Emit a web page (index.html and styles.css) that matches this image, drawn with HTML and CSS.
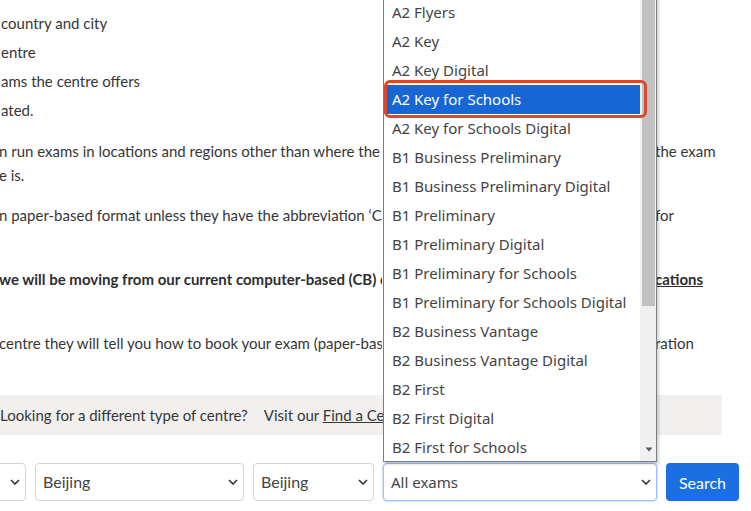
FILE: index.html
```html
<!DOCTYPE html>
<html lang="en">
<head>
<meta charset="utf-8">
<title>Find an exam centre</title>
<link rel="stylesheet" href="styles.css">
</head>
<body>
<div class="page">
  <ul class="list">
    <li>country and city</li>
    <li>entre</li>
    <li>ams the centre offers</li>
    <li>ated.</li>
  </ul>

  <p class="para">
    <span class="row"><span class="l">n run exams in locations and regions other than where the centre is based. Please check with the centre where</span><span class="r">the exam</span></span>
    <span class="row"><span class="l">e is.</span></span>
  </p>

  <p class="para">
    <span class="row"><span class="l">n paper-based format unless they have the abbreviation ‘CB’ (computer-based) next to them. Please ask the centre</span><span class="r">for</span></span>
    <span class="row"><span class="l"></span></span>
  </p>

  <p class="para bold">
    <span class="row"><span class="l">we will be moving from our current computer-based (CB) exams to our <u>new digital qualifi</u></span><span class="r"><u>cations</u></span></span>
    <span class="row"><span class="l"></span></span>
  </p>

  <p class="para">
    <span class="row"><span class="l">centre they will tell you how to book your exam (paper-based or computer-based) and the regist</span><span class="r">ration</span></span>
    <span class="row"><span class="l"></span></span>
  </p>

  <div class="notice">
    <span>Looking for a different type of centre?</span>
    <span class="visit">Visit our <u>Find a Centre</u> page</span>
  </div>

  <div class="filters">
    <div class="select s1"><span class="val">China</span><svg class="chev" width="10" height="6" viewBox="0 0 10 6"><path d="M1 1l4 4 4-4" fill="none" stroke="#333" stroke-width="1.6"/></svg></div>
    <div class="select s2"><span class="val">Beijing</span><svg class="chev" width="10" height="6" viewBox="0 0 10 6"><path d="M1 1l4 4 4-4" fill="none" stroke="#333" stroke-width="1.6"/></svg></div>
    <div class="select s3"><span class="val">Beijing</span><svg class="chev" width="10" height="6" viewBox="0 0 10 6"><path d="M1 1l4 4 4-4" fill="none" stroke="#333" stroke-width="1.6"/></svg></div>
    <div class="select s4 focus"><span class="val sys">All exams</span><svg class="chev" width="10" height="6" viewBox="0 0 10 6"><path d="M1 1l4 4 4-4" fill="none" stroke="#333" stroke-width="1.6"/></svg></div>
    <button class="btn">Search</button>
  </div>
</div>

<div class="popup">
  <ul class="opts">
    <li>A1 Movers</li>
    <li>A2 Flyers</li>
    <li>A2 Key</li>
    <li>A2 Key Digital</li>
    <li class="sel">A2 Key for Schools</li>
    <li>A2 Key for Schools Digital</li>
    <li>B1 Business Preliminary</li>
    <li>B1 Business Preliminary Digital</li>
    <li>B1 Preliminary</li>
    <li>B1 Preliminary Digital</li>
    <li>B1 Preliminary for Schools</li>
    <li>B1 Preliminary for Schools Digital</li>
    <li>B2 Business Vantage</li>
    <li>B2 Business Vantage Digital</li>
    <li>B2 First</li>
    <li>B2 First Digital</li>
    <li>B2 First for Schools</li>
  </ul>
  <div class="sb">
    <div class="thumb"></div>
    <svg class="arrow" width="8" height="5" viewBox="0 0 8 5"><path d="M0.5 0.5h7L4 4.5z" fill="#555"/></svg>
  </div>
</div>
<div class="mark"></div>
</body>
</html>
```

FILE: styles.css
```css
html, body {
  margin: 0;
  padding: 0;
  background: #fff;
  overflow: hidden;
  height: 511px;
}
body {
  font-family: Lato, "Liberation Sans", sans-serif;
  font-size: 15px;
  line-height: 24px;
  color: #363636;
  position: relative;
}
.page {
  padding-top: 11px;
}
.list {
  list-style: none;
  margin: 0 0 17px 0;
  padding: 0 0 0 1px;
}
.list li {
  margin-bottom: 5px;
}
.list li:last-child {
  margin-bottom: 0;
}
.para {
  margin: 0 0 16px 0;
}
.row {
  display: flex;
  height: 24px;
  white-space: nowrap;
}
.row .l {
  width: 383px;
  flex: none;
  overflow: hidden;
  margin-left: -1px;
}
.row .r {
  flex: none;
  margin-left: 273px;
}
.bold {
  font-weight: 700;
  color: #2e2e2e;
}
.notice {
  width: 722px;
  height: 40px;
  background: #f1f0ef;
  display: flex;
  align-items: center;
  gap: 16px;
  white-space: nowrap;
  overflow: hidden;
}
.filters {
  display: flex;
  gap: 9px;
  margin-top: 28px;
  height: 38px;
}
.select {
  box-sizing: border-box;
  height: 38px;
  border: 1px solid #ced4da;
  border-radius: 4px;
  background: #fff;
  display: flex;
  align-items: center;
  justify-content: space-between;
  padding: 0 5px 0 7px;
  font-size: 16px;
  color: #444;
  flex: none;
}
.s1 { width: 120px; margin-left: -94px; }
.s2 { width: 209px; }
.s3 { width: 121px; }
.s4 { width: 274px; }
.focus {
  border-color: #9cc3fb;
  box-shadow: 0 0 0 1px rgba(120, 170, 250, .35);
}
.sys {
  font-family: "Noto Sans", sans-serif;
  font-size: 15px;
  color: #444;
}
.chev { flex: none; }
.btn {
  box-sizing: border-box;
  width: 73px;
  height: 38px;
  border: none;
  border-radius: 4px;
  background: #1b6fe2;
  color: #fff;
  font-family: Lato, "Liberation Sans", sans-serif;
  font-size: 16px;
  padding: 0;
  flex: none;
}
.popup {
  position: absolute;
  left: 383px;
  top: -32px;
  width: 274px;
  height: 494px;
  box-sizing: border-box;
  border: 1px solid #7d7d7d;
  background: #fff;
  display: flex;
  box-shadow: 2px 2px 3px rgba(0, 0, 0, .18);
}
.opts {
  list-style: none;
  margin: 0;
  padding: 0;
  flex: 1;
  font-family: "Noto Sans", sans-serif;
  font-size: 15px;
  color: #444;
}
.opts li {
  height: 29px;
  line-height: 29px;
  padding-left: 8px;
  white-space: nowrap;
}
.opts li.sel {
  background: #1766d6;
  color: #fff;
}
.sb {
  width: 16px;
  flex: none;
  background: #f0f0f0;
  position: relative;
}
.thumb {
  margin: 0 1px 0 2px;
  height: 337px;
  background: #c1c1c1;
}
.arrow {
  position: absolute;
  left: 5px;
  bottom: 9px;
}
.mark {
  position: absolute;
  left: 384px;
  top: 80px;
  width: 263px;
  height: 38px;
  box-sizing: border-box;
  border: 3px solid #d8472e;
  border-radius: 6px;
}
```
